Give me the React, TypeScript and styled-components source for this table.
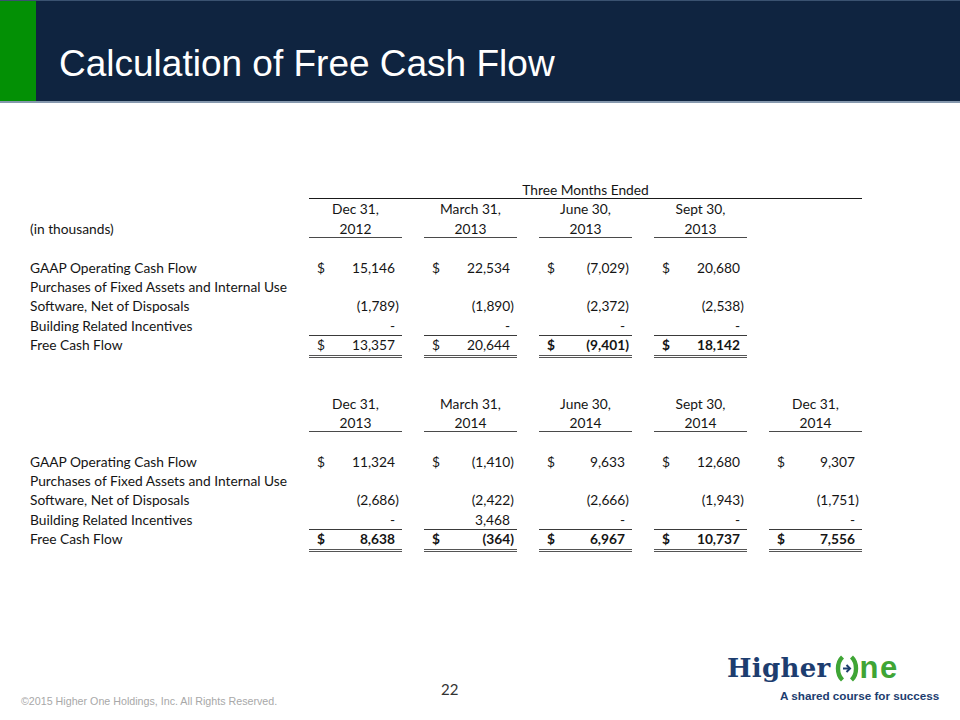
import styled, { createGlobalStyle } from "styled-components";

type Cell = { v: string; dollar?: boolean; bold?: boolean };

type Row = {
    label: string;
    cells: Cell[];
    kind?: "plain" | "total";
};

type TableData = {
    caption?: string;
    periods: [string, string][];
    label?: string;
    rows: Row[];
};

const money = (v: string, dollar = false, bold = false): Cell => ({ v, dollar, bold });

const first: TableData = {
    caption: "Three Months Ended",
    label: "(in thousands)",
    periods: [["Dec 31,", "2012"], ["March 31,", "2013"], ["June 30,", "2013"], ["Sept 30,", "2013"]],
    rows: [
        { label: "GAAP Operating Cash Flow", cells: [money("15,146", true), money("22,534", true), money("(7,029)", true), money("20,680", true)] },
        { label: "Purchases of Fixed Assets and Internal Use", cells: [] },
        { label: "Software, Net of Disposals", cells: [money("(1,789)"), money("(1,890)"), money("(2,372)"), money("(2,538)")] },
        { label: "Building Related Incentives", cells: [money("-"), money("-"), money("-"), money("-")] },
        { label: "Free Cash Flow", kind: "total", cells: [money("13,357", true), money("20,644", true), money("(9,401)", true, true), money("18,142", true, true)] },
    ],
};

const second: TableData = {
    periods: [["Dec 31,", "2013"], ["March 31,", "2014"], ["June 30,", "2014"], ["Sept 30,", "2014"], ["Dec 31,", "2014"]],
    rows: [
        { label: "GAAP Operating Cash Flow", cells: [money("11,324", true), money("(1,410)", true), money("9,633", true), money("12,680", true), money("9,307", true)] },
        { label: "Purchases of Fixed Assets and Internal Use", cells: [] },
        { label: "Software, Net of Disposals", cells: [money("(2,686)"), money("(2,422)"), money("(2,666)"), money("(1,943)"), money("(1,751)")] },
        { label: "Building Related Incentives", cells: [money("-"), money("3,468"), money("-"), money("-"), money("-")] },
        { label: "Free Cash Flow", kind: "total", cells: [money("8,638", true, true), money("(364)", true, true), money("6,967", true, true), money("10,737", true, true), money("7,556", true, true)] },
    ],
};

const CashTable = ({ data }: { data: TableData }) => {
    const n = data.periods.length;
    return (
        <Grid>
            {data.caption && (
                <>
                    <Label />
                    <Caption>{data.caption}</Caption>
                </>
            )}
            <Label />
            {data.periods.map((p, i) => <Head key={`a${i}`}>{p[0]}</Head>)}
            <Filler $span={5 - n} />
            <Label>{data.label}</Label>
            {data.periods.map((p, i) => <Head key={`b${i}`} $rule>{p[1]}</Head>)}
            <Filler $span={5 - n} />
            <Blank />
            {data.rows.map((r, ri) => (
                <RowGroup key={ri}>
                    <Label>{r.label}</Label>
                    {data.periods.map((_, ci) => {
                        const c = r.cells[ci];
                        return (
                            <Amount key={ci} $total={r.kind === "total"} $bold={c?.bold}>
                                <span>{c?.dollar ? "$" : ""}</span>
                                <Num $neg={c ? c.v.startsWith("(") : false}>{c?.v}</Num>
                            </Amount>
                        );
                    })}
                    <Filler $span={5 - n} />
                </RowGroup>
            ))}
        </Grid>
    );
};

const App = () => (
    <>
        <GlobalStyle />
        <Slide>
            <Header>
                <Stripe />
                <Title>Calculation of Free Cash Flow</Title>
            </Header>
            <Body>
                <CashTable data={first} />
                <Spacer />
                <CashTable data={second} />
            </Body>
            <Footer>
                <Copyright>©2015 Higher One Holdings, Inc. All Rights Reserved.</Copyright>
                <PageNum>22</PageNum>
                <Logo>
                    <LogoMark>
                        <Higher>Higher</Higher>
                        <svg width="24" height="27" viewBox="0 0 24 27">
                            <path d="M7.5 2 C1.5 7.5 1.5 19.5 7.5 25" fill="none" stroke="#3fa535" strokeWidth="4.4" />
                            <path d="M16.5 2 C22.5 7.5 22.5 19.5 16.5 25" fill="none" stroke="#3fa535" strokeWidth="4.4" />
                            <path d="M8 13.5 H14.5" stroke="#1d3d6f" strokeWidth="2" />
                            <path d="M11.5 10 L15 13.5 L11.5 17" fill="none" stroke="#1d3d6f" strokeWidth="2" />
                        </svg>
                        <One>ne</One>
                    </LogoMark>
                    <Tagline>A shared course for success</Tagline>
                </Logo>
            </Footer>
        </Slide>
    </>
);

export default App;

const GlobalStyle = createGlobalStyle`
    html, body {
        margin: 0;
        padding: 0;
        background: #ffffff;
    }
`;

const Slide = styled.div`
    width: 960px;
    height: 720px;
    display: flex;
    flex-direction: column;
    background: #ffffff;
    overflow: hidden;
`;

const Header = styled.div`
    height: 103px;
    display: flex;
    background: #0f2440;
    border-top: 1px solid #3a5270;
    border-bottom: 2px solid #8598ad;
    box-sizing: border-box;
`;

const Stripe = styled.div`
    width: 36px;
    background: #039005;
`;

const Title = styled.h1`
    margin: 0;
    padding: 42px 0 0 23px;
    font-family: "Liberation Sans", Arial, sans-serif;
    font-weight: 400;
    font-size: 37px;
    line-height: 41px;
    color: #ffffff;
`;

const Body = styled.div`
    padding: 77px 0 0 30px;
    font-family: Lato, "Liberation Sans", sans-serif;
    font-size: 13.75px;
    color: #151515;
`;

const Grid = styled.div`
    display: grid;
    grid-template-columns: 257px repeat(5, 93px);
    column-gap: 22px;
    grid-auto-rows: 19.4px;
    line-height: 19.4px;
`;

const RowGroup = styled.div`
    display: contents;
`;

const Label = styled.div`
    white-space: nowrap;
`;

const Caption = styled.div`
    grid-column: span 5;
    text-align: center;
    border-bottom: 1px solid #1a1a1a;
`;

const Head = styled.div<{ $rule?: boolean }>`
    text-align: center;
    border-bottom: ${(p) => (p.$rule ? "1.5px solid #4a4a4a" : "none")};
`;

const Filler = styled.div<{ $span: number }>`
    display: ${(p) => (p.$span > 0 ? "block" : "none")};
    grid-column: span ${(p) => Math.max(p.$span, 1)};
`;

const Blank = styled.div`
    grid-column: 1 / -1;
`;

const Amount = styled.div<{ $total?: boolean; $bold?: boolean }>`
    display: flex;
    justify-content: space-between;
    padding-left: 8px;
    font-weight: ${(p) => (p.$bold ? 700 : 400)};
    box-sizing: border-box;
    border-top: ${(p) => (p.$total ? "1px solid #3a3a3a" : "none")};
    border-bottom: ${(p) => (p.$total ? "3px double #555555" : "none")};
    line-height: ${(p) => (p.$total ? "18.4px" : "19.4px")};
    height: ${(p) => (p.$total ? "22.4px" : "19.4px")};
`;

const Num = styled.span<{ $neg?: boolean }>`
    padding-right: ${(p) => (p.$neg ? "3px" : "7px")};
`;

const Spacer = styled.div`
    height: 39px;
`;

const Footer = styled.div`
    margin-top: auto;
    display: grid;
    grid-template-columns: 434px 60px 1fr;
    align-items: end;
    padding-bottom: 12px;
`;

const Copyright = styled.div`
    padding-left: 21px;
    font-family: "Liberation Sans", Arial, sans-serif;
    font-size: 10.7px;
    color: #a8a8a8;
    line-height: 13px;
`;

const PageNum = styled.div`
    font-family: Lato, "Liberation Sans", sans-serif;
    font-size: 15px;
    color: #333333;
    padding-left: 7px;
    margin-bottom: 10px;
`;

const Logo = styled.div`
    display: flex;
    flex-direction: column;
    align-items: flex-start;
    padding-left: 233px;
    margin-bottom: 6px;
`;

const LogoMark = styled.div`
    display: flex;
    align-items: center;
    gap: 4px;
    height: 34px;
`;

const Higher = styled.span`
    font-family: "DejaVu Serif", "Liberation Serif", serif;
    font-weight: 700;
    font-size: 26px;
    color: #1d3d6f;
    letter-spacing: 0.3px;
`;

const One = styled.span`
    font-family: "Liberation Sans", Arial, sans-serif;
    font-weight: 700;
    font-size: 31px;
    color: #3fa535;
    letter-spacing: 1.5px;
    margin-left: -3px;
`;

const Tagline = styled.div`
    margin-left: 53px;
    margin-top: 4px;
    font-family: "Liberation Sans", Arial, sans-serif;
    font-weight: 700;
    font-size: 11.7px;
    color: #1d3d6f;
`;
